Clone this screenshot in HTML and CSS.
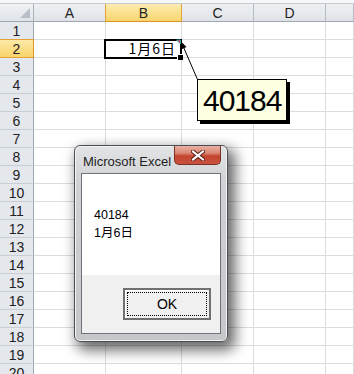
FILE: index.html
```html
<!DOCTYPE html>
<html>
<head>
  <title>Excel - date value</title>
  <link rel="stylesheet" href="styles.css">
</head>
<body>
  <div class="topbar"></div>

  <div class="sheet" id="sheet">
    <div class="corner"></div>
    <div class="colhead">A</div>
    <div class="colhead sel">B</div>
    <div class="colhead">C</div>
    <div class="colhead">D</div>
    <div class="colhead"></div>
    <!-- rows are added by the script below -->
  </div>

  <!-- comment arrow + indicator, drawn in page coordinates -->
  <svg class="comment-arrow" width="32" height="48" viewBox="170 36 32 48">
    <line x1="183" y1="46" x2="197.5" y2="79.5" stroke="#000" stroke-width="1"/>
    <polygon points="181.5,42 181,49.5 186.5,47" fill="#000"/>
    <polygon points="176.5,40 180.5,40 180.5,44" fill="#e8262a" stroke="#1fd0d8" stroke-width="0.8"/>
  </svg>

  <div class="comment-box">40184</div>

  <div class="msgbox">
    <div class="msg-title">
      <span class="msg-caption">Microsoft Excel</span>
      <span class="close-btn">
        <svg width="14" height="11" viewBox="0 0 14 11">
          <path d="M2 1.5 L12 9.5 M12 1.5 L2 9.5" stroke="#5a2018" stroke-width="4" stroke-linecap="square"/>
          <path d="M2 1.5 L12 9.5 M12 1.5 L2 9.5" stroke="#ffffff" stroke-width="2" stroke-linecap="square"/>
        </svg>
      </span>
    </div>
    <div class="msg-client">
      <div class="msg-text">
        <div>40184</div>
        <div>1月6日</div>
      </div>
      <div class="msg-footer">
        <button class="ok-btn"><span class="ok-focus">OK</span></button>
      </div>
    </div>
  </div>

  <script>
    // build rows 1..20 of the sheet
    var sheet = document.getElementById('sheet');
    for (var r = 1; r <= 20; r++) {
      var head = document.createElement('div');
      head.className = r === 2 ? 'rowhead sel' : 'rowhead';
      head.textContent = r;
      sheet.appendChild(head);

      for (var c = 0; c < 5; c++) {
        var cell = document.createElement('div');
        cell.className = 'cell';
        if (r === 2 && c === 1) {
          // active cell B2
          cell.className = 'cell active';
          cell.innerHTML = '<span class="cell-value">1月6日</span>' +
            '<span class="sel-box"></span><span class="fill-handle"></span>';
        }
        sheet.appendChild(cell);
      }
    }
  </script>
</body>
</html>
```

FILE: styles.css
```css
/* Page */
body {
  margin: 0;
  padding: 0;
  width: 354px;
  height: 374px;
  overflow: hidden;
  position: relative;
  background: #ffffff;
  font-family: "Liberation Sans", Arial, sans-serif;
}

.topbar {
  height: 3px;
  background-color: #f6f7f8;
  border-bottom: 1px solid #c3c9d0;
}

/* Sheet grid */
.sheet {
  display: grid;
  grid-template-columns: 34px 72px 76px 72px 72px 1fr;
  grid-template-rows: 18px;
  grid-auto-rows: 18px;
}

.sheet > div {
  box-sizing: border-box;
}

.corner {
  position: relative;
  background: linear-gradient(#f0f2f4, #dfe3e8);
  border-right: 1px solid #aab2bc;
  border-bottom: 1px solid #9ea7b1;
}

.corner::after {
  content: "";
  position: absolute;
  right: 3px;
  bottom: 3px;
  border-left: 10px solid transparent;
  border-bottom: 10px solid #b8bec6;
}

.colhead {
  background: linear-gradient(#eef0f3, #dfe3e8);
  border-right: 1px solid #b3bac4;
  border-bottom: 1px solid #9ea7b1;
  color: #222;
  font-size: 14px;
  text-align: center;
  line-height: 19px;
}

.colhead.sel {
  background: linear-gradient(#fdecb0, #f9d66e);
  border-right: 1px solid #e3a23a;
  border-left: 1px solid #e3a23a;
  margin-left: -1px;
  border-bottom: 1px solid #d9922a;
}

.rowhead {
  background-color: #e4e7ec;
  border-right: 1px solid #9ea7b1;
  border-bottom: 1px solid #c9ced6;
  color: #222;
  font-size: 14px;
  text-align: center;
  line-height: 18px;
}

.rowhead.sel {
  background: linear-gradient(#fde9a8, #f9d46a);
  border-right: 1px solid #d9922a;
  border-bottom: 1px solid #e3a23a;
  border-top: 1px solid #e3a23a;
  margin-top: -1px;
  height: 19px;
}

.cell {
  border-right: 1px solid #dadcdd;
  border-bottom: 1px solid #dadcdd;
}

/* Active cell B2 */
.cell.active {
  position: relative;
  text-align: right;
}

.cell-value {
  display: block;
  padding-right: 5px;
  font-family: "Noto Sans CJK JP", sans-serif;
  font-size: 14px;
  letter-spacing: 1px;
  line-height: 17px;
  color: #000;
}

.sel-box {
  position: absolute;
  left: -2px;
  top: -1px;
  right: -1px;
  bottom: -2px;
  border: 2px solid #000;
}

.fill-handle {
  position: absolute;
  right: -2px;
  bottom: -3px;
  width: 5px;
  height: 5px;
  background-color: #000;
  border-left: 1px solid #fff;
  border-top: 1px solid #fff;
}

/* Comment */
.comment-arrow {
  position: absolute;
  left: 170px;
  top: 36px;
}

.comment-box {
  position: absolute;
  left: 197px;
  top: 79px;
  width: 90px;
  height: 42px;
  box-sizing: border-box;
  border: 1px solid #000;
  background-color: #ffffe1;
  box-shadow: 3px 3px 0 #000;
  padding-left: 5px;
  font-size: 30px;
  letter-spacing: -1px;
  line-height: 41px;
  color: #000;
}

/* Message box */
.msgbox {
  position: absolute;
  left: 74px;
  top: 145px;
  width: 154px;
  height: 197px;
  box-sizing: border-box;
  display: flex;
  flex-direction: column;
  padding: 0 6px 7px 6px;
  border: 1px solid #4b4f55;
  border-radius: 6px;
  background: linear-gradient(#e2e3e5, #cfd1d4 20%, #c5c7ca);
  box-shadow: inset 0 0 0 1px #f3f3f3, 5px 6px 14px 2px rgba(0, 0, 0, 0.6);
}

.msg-title {
  height: 27px;
  display: flex;
  align-items: center;
  justify-content: space-between;
}

.msg-caption {
  margin-left: 2px;
  margin-top: 3px;
  font-size: 13px;
  color: #1e1e1e;
}

.close-btn {
  align-self: flex-start;
  width: 47px;
  height: 19px;
  box-sizing: border-box;
  display: flex;
  align-items: center;
  justify-content: center;
  border: 1px solid #7a3226;
  border-top: none;
  border-radius: 0 0 5px 5px;
  background: linear-gradient(#eab0a2, #d98672 40%, #c4442e 55%, #c95340);
}

.msg-client {
  flex: 1;
  display: flex;
  flex-direction: column;
  border: 1px solid #6f7378;
  background-color: #ffffff;
}

.msg-text {
  flex: 1;
  padding: 32px 0 0 12px;
  font-family: "Liberation Sans", "Noto Sans CJK JP", sans-serif;
  font-size: 12.5px;
  line-height: 18px;
  color: #000;
}

.msg-footer {
  height: 58px;
  box-sizing: border-box;
  display: flex;
  justify-content: flex-end;
  align-items: flex-start;
  padding: 13px 9px 0 0;
  background-color: #f0f0f0;
}

.ok-btn {
  width: 88px;
  height: 32px;
  box-sizing: border-box;
  padding: 2px;
  margin: 0;
  border: 2px solid #707070;
  background-color: #f0f0f0;
  box-shadow: inset 1px 1px 0 #ffffff;
  font-family: "Liberation Sans", Arial, sans-serif;
  font-size: 14px;
  color: #000;
}

.ok-focus {
  display: flex;
  align-items: center;
  justify-content: center;
  height: 100%;
  box-sizing: border-box;
  border: 1px dotted #000;
}
```
